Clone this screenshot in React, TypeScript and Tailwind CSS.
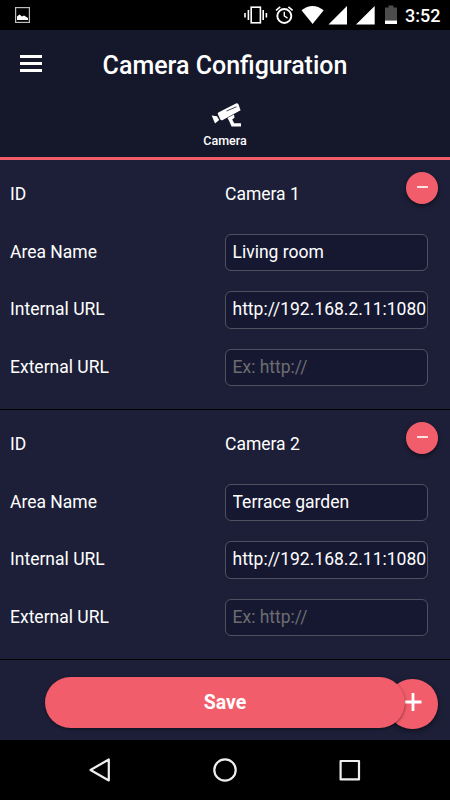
import React, { useState } from "react";

interface CameraConfig {
  id: number;
  name: string;
  area: string;
  internalUrl: string;
  externalUrl: string;
}

const initialCameras: CameraConfig[] = [
  { id: 1, name: "Camera 1", area: "Living room", internalUrl: "http://192.168.2.11:1080", externalUrl: "" },
  { id: 2, name: "Camera 2", area: "Terrace garden", internalUrl: "http://192.168.2.11:1080", externalUrl: "" },
];

function StatusBar() {
  return (
    <div className="h-[30px] shrink-0 bg-black flex items-center justify-between pl-[15px] pr-[10px]">
      <svg width="15" height="16" viewBox="0 0 15 16">
        <rect x="0.6" y="0.6" width="13.8" height="14.8" fill="none" stroke="#bdbdbd" strokeWidth="1.2" />
        <path d="M2 13V9.5L4.5 7.5L7 9.5L9 8.5L13 11V13Z" fill="#fff" />
      </svg>
      <div className="flex items-center">
        {/* Vibrate, alarm, wifi, two sims, battery */}
        <svg className="shrink-0" width="165" height="30" viewBox="240 0 165 30" fill="#fff">
          <g fill="none" stroke="#fff">
            <rect x="251.2" y="7.2" width="9.2" height="15.6" strokeWidth="1.6" />
            <path d="M248.4 10V20M245 13V17.5M263.2 10V20M266.4 13V17.5" strokeWidth="1.6" />
            <circle cx="284.3" cy="16" r="7" strokeWidth="1.9" />
            <path d="M284.3 11.8V16L287.5 18.2" strokeWidth="1.4" />
            <path d="M276 10.3L280.2 6.8M292.6 10.3L288.4 6.8" strokeWidth="1.7" />
          </g>
          <path d="M301.5 10.3Q312.5 1.7 323.7 10.3L312.6 24Z" />
          <path d="M328.5 24.5H347V6Z" />
          <path d="M356 24.5H374.7V6Z" />
          <path d="M385 7.5H388.5V5.5H393.5V7.5H397V20.5H385Z" fill="#4c4c4c" />
          <path d="M385 20.5H397V24H385Z" />
        </svg>
        <span className="w-[35px] text-[18px] font-medium leading-none text-white pt-[2px]">3:52</span>
      </div>
    </div>
  );
}

function CctvIcon() {
  return (
    <svg width="32" height="29" viewBox="0 1 32 29">
      <g fill="#fff">
        <path d="M9.3 13.4L27 4.4Q28.7 3.9 29.5 5.5L31.6 11.3L13.3 21.2Q12 21.8 11.2 20.3L8.7 14.8Z" />
        <path d="M2.7 16.4L8 17.3L10.2 21L6 24.6Z" />
        <path d="M18.5 19L25 15.5L25.5 18.8L23.2 20.6L25.2 24.3H32.3V27.6H22.6L20 21.8Z" />
      </g>
      <path d="M17.5 12L27.5 7.8" fill="none" stroke="#15172b" strokeWidth="0.8" />
    </svg>
  );
}

function Header() {
  return (
    <header className="h-[130px] shrink-0 bg-[#15172b] border-b-[3px] border-[#f25d6b]">
      <div className="relative h-[70px] flex items-center">
        <button aria-label="Menu" className="absolute left-5 top-[25px] flex flex-col gap-[4px]">
          <span className="block w-[22px] h-[2.5px] bg-white" />
          <span className="block w-[22px] h-[3px] bg-white" />
          <span className="block w-[22px] h-[3px] bg-white" />
        </button>
        <h1 className="w-full pt-0.5 text-center text-[25px] font-medium text-white">Camera Configuration</h1>
      </div>
      <div className="flex flex-col items-center">
        <CctvIcon />
        <span className="mt-[4px] text-[12.5px] leading-[15px] font-medium text-white">Camera</span>
      </div>
    </header>
  );
}

interface FieldRowProps {
  label: string;
  children: React.ReactNode;
}

function FieldRow({ label, children }: FieldRowProps) {
  return (
    <div className="h-[57.5px] flex items-center">
      <span className="w-[215px] shrink-0">{label}</span>
      {children}
    </div>
  );
}

function TextField({ value, placeholder }: { value: string; placeholder?: string }) {
  return (
    <input
      defaultValue={value}
      placeholder={placeholder}
      className="w-[203px] h-[37.5px] mt-[2px] pl-[6.5px] pb-0.5 rounded-[6px] border border-[#505160] bg-[#161832] text-white placeholder:text-[#6d6d70] outline-none"
    />
  );
}

function CameraSection({ camera, onRemove }: { camera: CameraConfig; onRemove: (id: number) => void }) {
  return (
    <section className="relative h-[250px] pt-[5.45px] pl-[10px] border-b border-black text-[17.5px] text-white">
      <FieldRow label="ID">
        <span>{camera.name}</span>
      </FieldRow>
      <FieldRow label="Area Name">
        <TextField value={camera.area} />
      </FieldRow>
      <FieldRow label="Internal URL">
        <TextField value={camera.internalUrl} placeholder="Ex: http://" />
      </FieldRow>
      <FieldRow label="External URL">
        <TextField value={camera.externalUrl} placeholder="Ex: http://" />
      </FieldRow>
      <button
        aria-label="Remove"
        onClick={() => onRemove(camera.id)}
        className="absolute right-3 top-3 w-8 h-8 pb-0.5 rounded-full bg-[#f25d6b] shadow-[0_2px_4px_rgba(0,0,0,0.5)] flex items-center justify-center"
      >
        <span className="block w-[11px] h-[2px] bg-[#fde3e5]" />
      </button>
    </section>
  );
}

function NavBar() {
  return (
    <nav className="h-[60px] shrink-0 bg-black flex items-center justify-center gap-[101px]">
      <svg width="24" height="26" viewBox="0 0 24 26" fill="none" stroke="#eee" strokeWidth="2.2" strokeLinejoin="round">
        <path d="M20.8 2.5V23.5L2.5 13Z" />
      </svg>
      <svg width="24" height="26" viewBox="0 0 24 26" fill="none" stroke="#eee" strokeWidth="2.2">
        <circle cx="12" cy="13" r="10.7" />
      </svg>
      <svg width="24" height="26" viewBox="0 0 24 26" fill="none" stroke="#eee" strokeWidth="2.2" strokeLinejoin="round">
        <rect x="2.6" y="4" width="18.4" height="18.4" />
      </svg>
    </nav>
  );
}

export default function App() {
  const [cameras, setCameras] = useState<CameraConfig[]>(initialCameras);

  const removeCamera = (id: number) => setCameras(cameras.filter((c) => c.id !== id));

  const addCamera = () => {
    const id = cameras.length ? cameras[cameras.length - 1].id + 1 : 1;
    setCameras([...cameras, { id, name: `Camera ${id}`, area: "", internalUrl: "", externalUrl: "" }]);
  };

  return (
    <div className="w-[450px] h-[800px] flex flex-col overflow-hidden bg-[#1d1f38] font-[Roboto,sans-serif]">
      <StatusBar />
      <Header />
      <main className="flex-1 overflow-hidden">
        {cameras.map((camera) => (
          <CameraSection key={camera.id} camera={camera} onRemove={removeCamera} />
        ))}
      </main>

      {/* Save bar, add button tucked behind it */}
      <div className="relative h-20 shrink-0 pt-[17px] pl-[45px]">
        <button
          aria-label="Add camera"
          onClick={addCamera}
          className="absolute right-3 top-[18.5px] w-[51px] h-[50px] rounded-full bg-[#f25d6b] shadow-[0_2px_5px_rgba(0,0,0,0.5)]"
        >
          <svg className="mx-auto -mt-[3px]" width="18" height="18" viewBox="0 0 18 18" stroke="#fff" strokeWidth="2.8">
            <path d="M9 0V18M0.5 9H17.5" />
          </svg>
        </button>
        <button className="relative w-[360px] h-[50.5px] rounded-full bg-[#f25d6b] shadow-[0_1px_3px_rgba(0,0,0,0.5)] text-[19.5px] font-bold text-white">
          Save
        </button>
      </div>
      <NavBar />
    </div>
  );
}
